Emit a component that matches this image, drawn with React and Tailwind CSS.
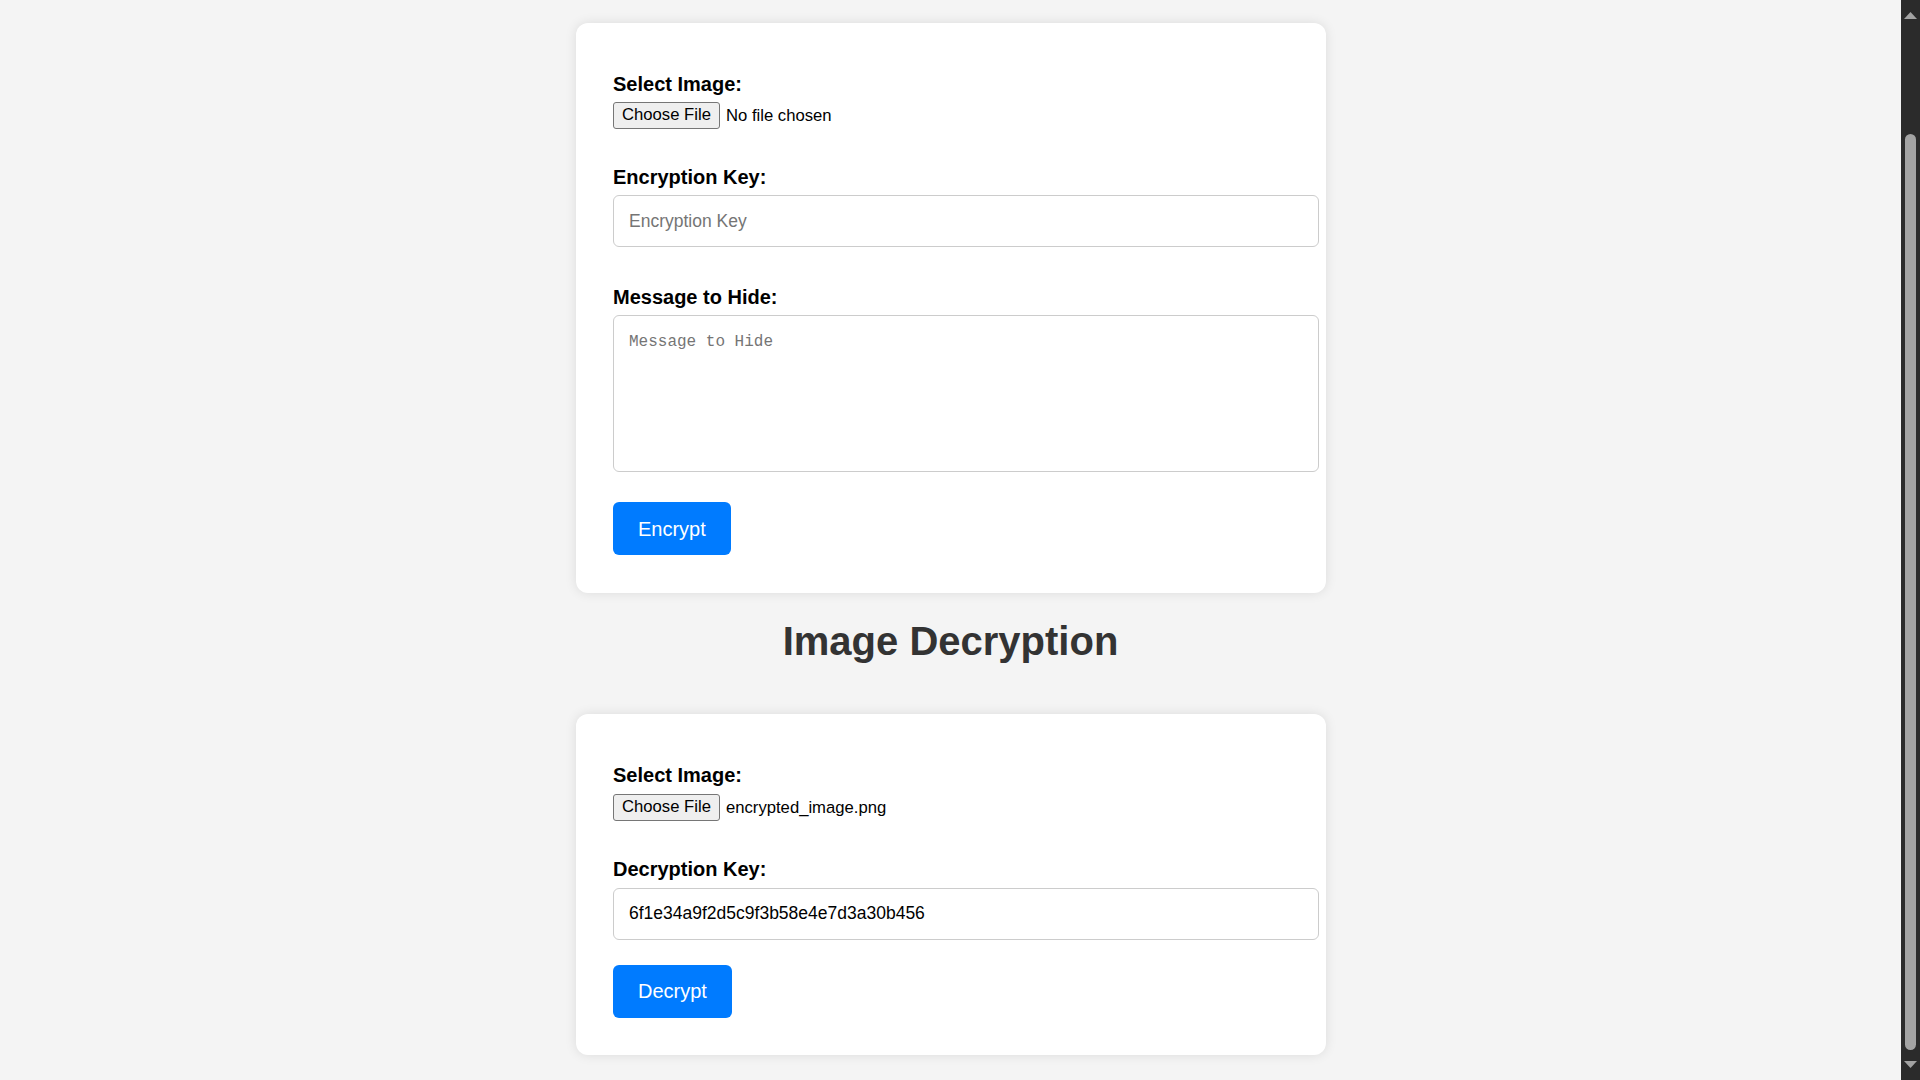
import { useState } from 'react'

function FileRow({ fileName, className }) {
  return (
    <div className={`flex items-center h-[26.5px] ${className}`}>
      <button
        type="button"
        className="h-[26.5px] w-[107px] border border-[#767676] bg-[#efefef] rounded-[3px] text-[16.67px] text-black leading-none"
      >
        Choose File
      </button>
      <span className="ml-[6px] text-[16.67px] text-black">{fileName}</span>
    </div>
  )
}

function Label({ children, className = '' }) {
  return (
    <label className={`block text-[20px] leading-[23px] font-bold text-black ${className}`}>
      {children}
    </label>
  )
}

function Scrollbar() {
  return (
    <div className="w-[19px] h-full bg-[#2b2b2b] flex flex-col items-center shrink-0">
      <svg width="13" height="7" viewBox="0 0 13 7" className="mt-[12px]">
        <polygon points="6.5,0 13,7 0,7" fill="#a3a3a3" />
      </svg>
      <div className="mt-[115px] h-[916px] w-[11px] rounded-full bg-[#a3a3a3]" />
      <svg width="13" height="7" viewBox="0 0 13 7" className="mt-[11px]">
        <polygon points="0,0 13,0 6.5,7" fill="#a3a3a3" />
      </svg>
    </div>
  )
}

export default function App() {
  const [key, setKey] = useState('')
  const [message, setMessage] = useState('')
  const [decKey, setDecKey] = useState('6f1e34a9f2d5c9f3b58e4e7d3a30b456')

  const card = 'w-[750px] bg-white rounded-[12px] shadow-[0_0_12px_rgba(0,0,0,0.1)] px-[37.5px] pt-[50px]'
  const field = 'block w-[706px] border border-[#cccccc] rounded-[6px] px-[15px] text-black placeholder:text-[#757575] outline-none'

  return (
    <div className="h-screen w-full flex overflow-hidden bg-[#f4f4f4] font-['Liberation_Sans',Arial,sans-serif]">
      <main className="flex-1 flex flex-col items-center pt-[23px]">
        <div className={`${card} pb-[38px]`}>
          <Label>Select Image:</Label>
          <FileRow fileName="No file chosen" className="mt-[6px]" />

          <Label className="mt-[37px]">Encryption Key:</Label>
          <input
            type="text"
            value={key}
            onChange={(e) => setKey(e.target.value)}
            placeholder="Encryption Key"
            className={`${field} mt-[6.5px] h-[52px] text-[17.5px]`}
          />

          <Label className="mt-[38.5px]">Message to Hide:</Label>
          <textarea
            value={message}
            onChange={(e) => setMessage(e.target.value)}
            placeholder="Message to Hide"
            className={`${field} mt-[6.5px] h-[157px] pt-[17px] pb-[15px] resize-none font-['Liberation_Mono',monospace] text-[16px] leading-[19px]`}
          />

          <button
            type="button"
            className="mt-[30px] h-[53px] px-[25px] bg-[#007bff] text-white text-[20px] rounded-[6px]"
          >
            Encrypt
          </button>
        </div>

        <h1 className="mt-[25px] text-[40px] leading-[46px] font-bold text-[#333333]">
          Image Decryption
        </h1>

        <div className={`${card} mt-[50px] pb-[37px]`}>
          <Label>Select Image:</Label>
          <FileRow fileName="encrypted_image.png" className="mt-[7px]" />

          <Label className="mt-[37.5px]">Decryption Key:</Label>
          <input
            type="text"
            value={decKey}
            onChange={(e) => setDecKey(e.target.value)}
            placeholder="Decryption Key"
            className={`${field} mt-[6.5px] h-[52px] text-[17.5px]`}
          />

          <button
            type="button"
            className="mt-[25.5px] h-[52.5px] px-[25px] bg-[#007bff] text-white text-[20px] rounded-[6px]"
          >
            Decrypt
          </button>
        </div>
      </main>
      <Scrollbar />
    </div>
  )
}
